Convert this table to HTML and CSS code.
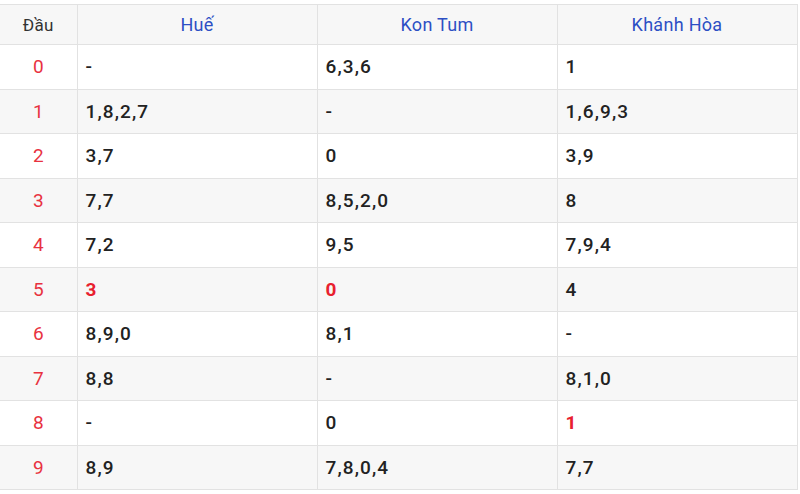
FILE: index.html
```html
<!DOCTYPE html>
<html lang="vi">
<head>
<meta charset="utf-8">
<title>Loto đầu</title>
<link rel="stylesheet" href="styles.css">
</head>
<body>
<div class="wrap">
<table class="loto">
<colgroup>
<col class="c-head"><col class="c-prov"><col class="c-prov"><col class="c-last">
</colgroup>
<thead>
<tr><th class="dau">Đầu</th><th>Huế</th><th>Kon Tum</th><th>Khánh Hòa</th></tr>
</thead>
<tbody>
<tr><td class="num">0</td><td>-</td><td>6,3,6</td><td>1</td></tr>
<tr><td class="num">1</td><td>1,8,2,7</td><td>-</td><td>1,6,9,3</td></tr>
<tr><td class="num">2</td><td>3,7</td><td>0</td><td>3,9</td></tr>
<tr><td class="num">3</td><td>7,7</td><td>8,5,2,0</td><td>8</td></tr>
<tr><td class="num">4</td><td>7,2</td><td>9,5</td><td>7,9,4</td></tr>
<tr><td class="num">5</td><td class="hot">3</td><td class="hot">0</td><td>4</td></tr>
<tr><td class="num">6</td><td>8,9,0</td><td>8,1</td><td>-</td></tr>
<tr><td class="num">7</td><td>8,8</td><td>-</td><td>8,1,0</td></tr>
<tr><td class="num">8</td><td>-</td><td>0</td><td class="hot">1</td></tr>
<tr><td class="num">9</td><td>8,9</td><td>7,8,0,4</td><td>7,7</td></tr>
</tbody>
</table>
</div>
</body>
</html>
```
FILE: styles.css
```css
html, body {
  margin: 0;
  padding: 0;
  background: #ffffff;
}
.wrap {
  padding-top: 4px;
}
.loto {
  border-collapse: collapse;
  table-layout: fixed;
  width: 797px;
  font-family: Roboto, "Liberation Sans", Arial, sans-serif;
  font-size: 19px;
  color: #222222;
}
.c-head { width: 77px; }
.c-prov { width: 240px; }
.c-last { width: 240px; }
.loto th, .loto td {
  border: 1px solid #e2e2e2;
  padding: 0 8px;
}
.loto tr > :first-child {
  border-left: none;
}
.loto th {
  height: 39px;
  background: #f7f7f7;
  font-weight: 400;
  font-size: 18px;
  color: #2d4fc4;
  text-align: center;
  letter-spacing: 0.3px;
}
.loto th.dau {
  color: #333333;
  font-size: 17px;
}
.loto td {
  height: 43.5px;
  font-weight: 500;
  letter-spacing: 1.1px;
  text-align: left;
}
.loto tbody tr:nth-child(even) td {
  background: #f7f7f7;
}
.loto td.num {
  text-align: center;
  color: #e8323f;
  font-weight: 400;
  letter-spacing: 0;
}
.loto td.hot {
  color: #e8202f;
  font-weight: 700;
}
```
